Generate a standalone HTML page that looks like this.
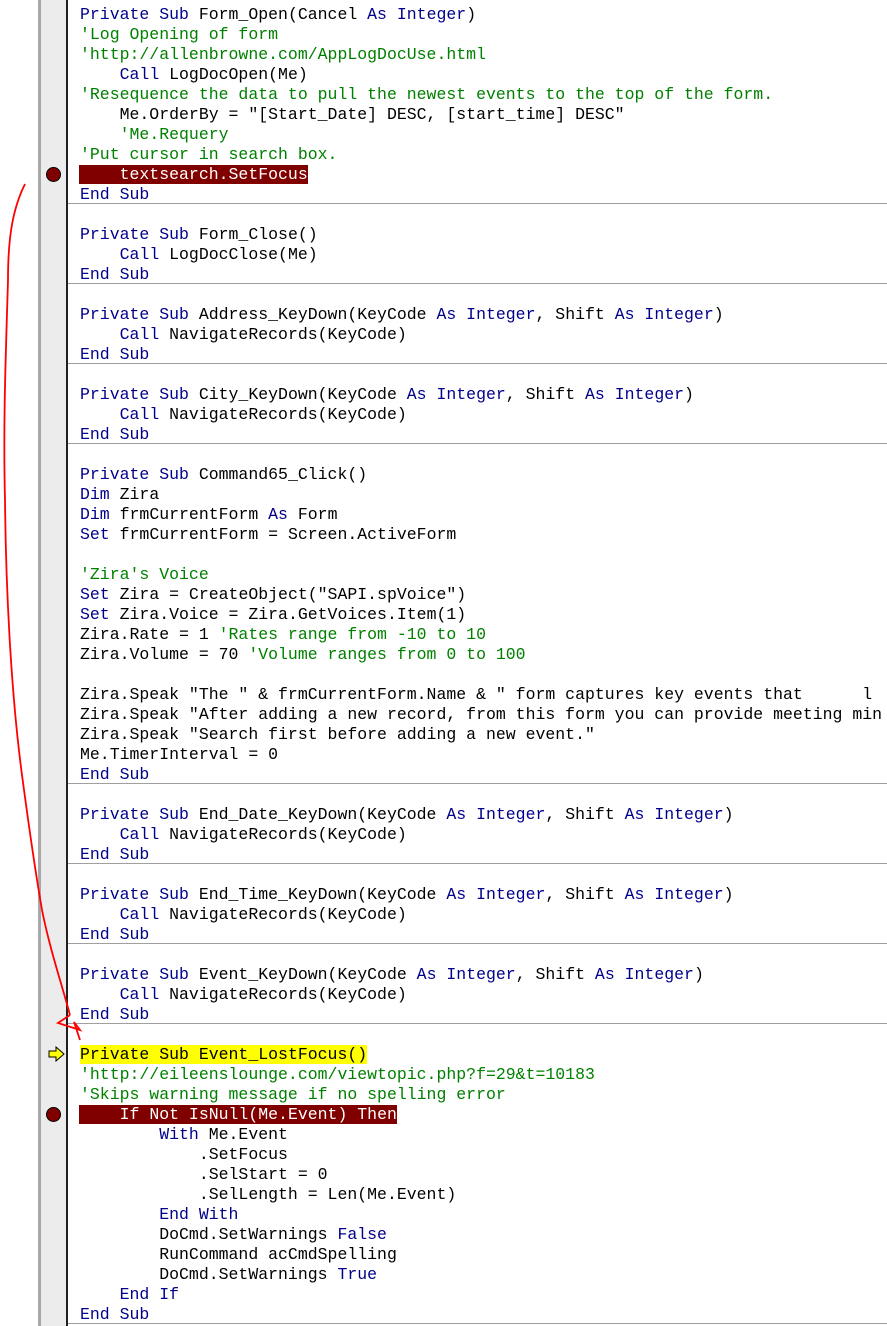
<!DOCTYPE html>
<html><head><meta charset="utf-8"><style>
html,body{margin:0;padding:0;background:#fff;width:887px;height:1326px;overflow:hidden;position:relative}
.g{position:absolute;left:38px;top:0;width:3px;height:1326px;background:#a8a8a8}
.g2{position:absolute;left:41px;top:0;width:25px;height:1326px;background:#ececec}
.g3{position:absolute;left:66px;top:0;width:2px;height:1326px;background:#202020}
.sep{position:absolute;left:68px;width:819px;height:1px;background:#a0a0a0}
pre{position:absolute;left:80px;top:5px;margin:0;font-family:"Liberation Mono",monospace;font-size:16.5px;line-height:20px;color:#000;white-space:pre}
.k{color:#00008b}.c{color:#008000}
.bp{background:#800000;color:#fff;margin-left:-1px;padding-left:1px}
.bp .k{color:#fff}
.y{background:#ffff00}
.y .k{color:#000}
.dot{position:absolute;left:46px;width:15px;height:15px;border-radius:50%;background:#800000;border:1px solid #000;box-sizing:border-box}
</style></head><body>
<div class="g"></div><div class="g2"></div><div class="g3"></div>
<div class="sep" style="top:203px"></div>
<div class="sep" style="top:283px"></div>
<div class="sep" style="top:363px"></div>
<div class="sep" style="top:443px"></div>
<div class="sep" style="top:783px"></div>
<div class="sep" style="top:863px"></div>
<div class="sep" style="top:943px"></div>
<div class="sep" style="top:1023px"></div>
<div class="sep" style="top:1323px"></div>
<div class="dot" style="top:167px"></div>
<div class="dot" style="top:1107px"></div>
<svg style="position:absolute;left:48px;top:1046px" width="18" height="16"><path d="M1 5 H8 V1 L16 8 L8 15 V11 H1 Z" fill="#ffff00" stroke="#000" stroke-width="1"/></svg>
<pre><span class="k">Private Sub</span> Form_Open(Cancel <span class="k">As Integer</span>)
<span class="c">'Log Opening of form</span>
<span class="c">'http://allenbrowne.com/AppLogDocUse.html</span>
    <span class="k">Call</span> LogDocOpen(Me)
<span class="c">'Resequence the data to pull the newest events to the top of the form.</span>
    Me.OrderBy = "[Start_Date] DESC, [start_time] DESC"
    <span class="c">'Me.Requery</span>
<span class="c">'Put cursor in search box.</span>
<span class="bp">    textsearch.SetFocus</span>
<span class="k">End Sub</span>

<span class="k">Private Sub</span> Form_Close()
    <span class="k">Call</span> LogDocClose(Me)
<span class="k">End Sub</span>

<span class="k">Private Sub</span> Address_KeyDown(KeyCode <span class="k">As Integer</span>, Shift <span class="k">As Integer</span>)
    <span class="k">Call</span> NavigateRecords(KeyCode)
<span class="k">End Sub</span>

<span class="k">Private Sub</span> City_KeyDown(KeyCode <span class="k">As Integer</span>, Shift <span class="k">As Integer</span>)
    <span class="k">Call</span> NavigateRecords(KeyCode)
<span class="k">End Sub</span>

<span class="k">Private Sub</span> Command65_Click()
<span class="k">Dim</span> Zira
<span class="k">Dim</span> frmCurrentForm <span class="k">As</span> Form
<span class="k">Set</span> frmCurrentForm = Screen.ActiveForm

<span class="c">'Zira's Voice</span>
<span class="k">Set</span> Zira = CreateObject("SAPI.spVoice")
<span class="k">Set</span> Zira.Voice = Zira.GetVoices.Item(1)
Zira.Rate = 1 <span class="c">'Rates range from -10 to 10</span>
Zira.Volume = 70 <span class="c">'Volume ranges from 0 to 100</span>

Zira.Speak "The " &amp; frmCurrentForm.Name &amp; " form captures key events that      l
Zira.Speak "After adding a new record, from this form you can provide meeting min
Zira.Speak "Search first before adding a new event."
Me.TimerInterval = 0
<span class="k">End Sub</span>

<span class="k">Private Sub</span> End_Date_KeyDown(KeyCode <span class="k">As Integer</span>, Shift <span class="k">As Integer</span>)
    <span class="k">Call</span> NavigateRecords(KeyCode)
<span class="k">End Sub</span>

<span class="k">Private Sub</span> End_Time_KeyDown(KeyCode <span class="k">As Integer</span>, Shift <span class="k">As Integer</span>)
    <span class="k">Call</span> NavigateRecords(KeyCode)
<span class="k">End Sub</span>

<span class="k">Private Sub</span> Event_KeyDown(KeyCode <span class="k">As Integer</span>, Shift <span class="k">As Integer</span>)
    <span class="k">Call</span> NavigateRecords(KeyCode)
<span class="k">End Sub</span>

<span class="y"><span class="k">Private Sub</span> Event_LostFocus()</span>
<span class="c">'http://eileenslounge.com/viewtopic.php?f=29&amp;t=10183</span>
<span class="c">'Skips warning message if no spelling error</span>
<span class="bp">    <span class="k">If Not</span> IsNull(Me.Event) <span class="k">Then</span></span>
        <span class="k">With</span> Me.Event
            .SetFocus
            .SelStart = 0
            .SelLength = Len(Me.Event)
        <span class="k">End With</span>
        DoCmd.SetWarnings <span class="k">False</span>
        RunCommand acCmdSpelling
        DoCmd.SetWarnings <span class="k">True</span>
    <span class="k">End If</span>
<span class="k">End Sub</span></pre>
<svg style="position:absolute;left:0;top:0" width="100" height="1326"><path d="M25 184 C12 210 8 240 8 280 C6 350 3 420 5 500 C6 600 12 700 22 775 C28 820 35 870 42 910 C50 950 62 985 70 1015" fill="none" stroke="#ff0000" stroke-width="1.8"/><path d="M70 1015 L58 1023 L80 1030 L74 1022 L80 1040" fill="none" stroke="#ff0000" stroke-width="1.8"/></svg>
</body></html>
